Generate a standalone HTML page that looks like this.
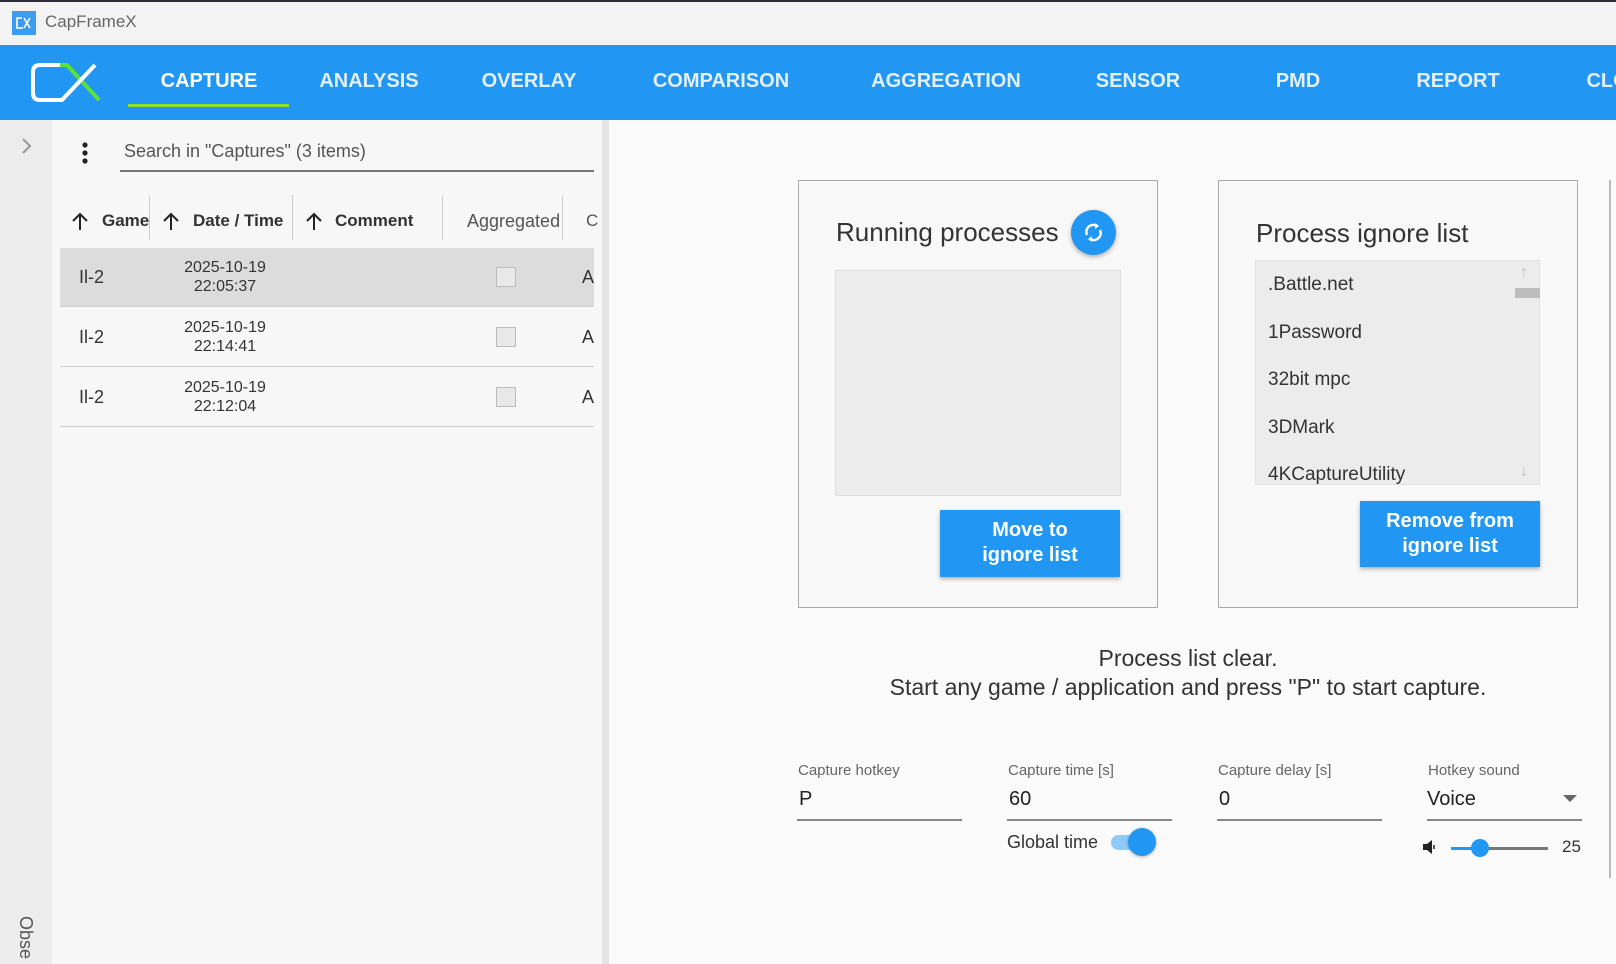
<!DOCTYPE html>
<html><head><meta charset="utf-8"><style>
*{box-sizing:border-box;margin:0;padding:0}
body{width:1616px;height:964px;overflow:hidden;background:#fafafa;font-family:"Liberation Sans",sans-serif;position:relative;color:#222}
.a{position:absolute}
.tab{position:absolute;top:70px;color:#e3f0fc;font-size:20px;font-weight:bold;transform:translateX(-50%);white-space:nowrap}
.hdr{position:absolute;top:211px;font-size:17px;font-weight:bold;color:#333}
.sep{position:absolute;top:195px;width:1px;height:45px;background:#ccc}
.row{position:absolute;left:60px;width:534px;border-bottom:1px solid #ccc}
.cell{position:absolute;font-size:18px;color:#333}
.dt{position:absolute;left:165px;width:120px;text-align:center;font-size:15px;line-height:19px;color:#333}
.cb{position:absolute;left:496px;width:20px;height:20px;border:1px solid #bbb;background:#e8e8e8}
.box{position:absolute;border:1px solid #aaa;background:#f8f8f8}
.btn{position:absolute;background:#2196f3;color:#fff;font-weight:bold;font-size:20px;text-align:center;line-height:25px;box-shadow:0 2px 4px rgba(0,0,0,.3);padding-top:8px}
.lbl{position:absolute;top:762px;font-size:15px;color:#666}
.val{position:absolute;top:786px;font-size:20px;color:#222}
.ul{position:absolute;top:819px;height:2px;background:#888}
.it{position:absolute;left:1268px;font-size:19px;color:#333}
</style></head><body>
<div class="a" style="left:0;top:0;width:1616px;height:2px;background:#2b2b3b"></div>
<div class="a" style="left:0;top:2px;width:1616px;height:43px;background:#f3f3f3"></div>
<div class="a" style="left:12px;top:11px;width:24px;height:24px;background:#3d9bf0"></div>
<svg class="a" style="left:12px;top:11px" width="24" height="24"><path d="M10 7H5v10h6M12 7l6 10M18 7l-6 10" stroke="#fff" stroke-width="1.6" fill="none"/></svg>
<div class="a" style="left:45px;top:12px;font-size:17px;color:#666">CapFrameX</div>
<div class="a" style="left:0;top:45px;width:1616px;height:75px;background:#2196f3"></div>
<svg class="a" style="left:20px;top:55px" width="90" height="55"><path d="M40 10H47L79 45" stroke="#5de03a" stroke-width="4" fill="none" stroke-linejoin="round"/><path d="M40 10H20Q13 10 13 17V38Q13 45 20 45H42L75 10" stroke="#fff" stroke-width="4" fill="none" stroke-linejoin="round"/></svg>
<div class="tab" style="left:209px;color:#fff">CAPTURE</div>
<div class="a" style="left:128px;top:104px;width:161px;height:3px;background:#8ee02a"></div>
<div class="tab" style="left:369px">ANALYSIS</div>
<div class="tab" style="left:529px">OVERLAY</div>
<div class="tab" style="left:721px">COMPARISON</div>
<div class="tab" style="left:946px">AGGREGATION</div>
<div class="tab" style="left:1138px">SENSOR</div>
<div class="tab" style="left:1298px">PMD</div>
<div class="tab" style="left:1458px">REPORT</div>
<div class="tab" style="left:1622px">CLOUD</div>
<div class="a" style="left:0;top:120px;width:52px;height:844px;background:#ececec"></div>
<svg class="a" style="left:20px;top:137px" width="14" height="18"><path d="M3 2l7 7-7 7" stroke="#999" stroke-width="2" fill="none"/></svg>
<div class="a" style="top:916px;font-size:18px;color:#555;transform:rotate(90deg);transform-origin:left top;left:36px">Obse</div>
<div class="a" style="left:52px;top:120px;width:550px;height:844px;background:#f7f7f7"></div>
<div class="a" style="left:602px;top:120px;width:7px;height:844px;background:#e4e4e4"></div>
<svg class="a" style="left:80px;top:141px" width="10" height="26"><circle cx="5" cy="4" r="2.6" fill="#222"/><circle cx="5" cy="12" r="2.6" fill="#222"/><circle cx="5" cy="20" r="2.6" fill="#222"/></svg>
<div class="a" style="left:124px;top:141px;font-size:18px;color:#555">Search in "Captures" (3 items)</div>
<div class="a" style="left:120px;top:170px;width:474px;height:2px;background:#777"></div>
<svg class="a" style="left:70px;top:211px" width="20" height="20"><path d="M10 19V3M3 10l7-7 7 7" stroke="#222" stroke-width="2" fill="none"/></svg>
<div class="hdr" style="left:102px">Game</div>
<div class="sep" style="left:149px"></div>
<svg class="a" style="left:161px;top:211px" width="20" height="20"><path d="M10 19V3M3 10l7-7 7 7" stroke="#222" stroke-width="2" fill="none"/></svg>
<div class="hdr" style="left:193px">Date / Time</div>
<div class="sep" style="left:292px"></div>
<svg class="a" style="left:304px;top:211px" width="20" height="20"><path d="M10 19V3M3 10l7-7 7 7" stroke="#222" stroke-width="2" fill="none"/></svg>
<div class="hdr" style="left:335px">Comment</div>
<div class="sep" style="left:442px"></div>
<div class="hdr" style="left:467px;font-weight:normal;color:#555;font-size:18px">Aggregated</div>
<div class="sep" style="left:562px"></div>
<div class="hdr" style="left:586px;font-weight:normal;color:#555">C</div>
<div class="row" style="top:248px;height:59px;background:#dcdcdc"></div>
<div class="row" style="top:307px;height:60px"></div>
<div class="row" style="top:367px;height:60px"></div>
<div class="cell" style="left:79px;top:267px">Il-2</div><div class="dt" style="top:258px;font-size:16px">2025-10-19<br>22:05:37</div><div class="cb" style="top:267px"></div><div class="cell" style="left:582px;top:267px">A</div>
<div class="cell" style="left:79px;top:327px">Il-2</div><div class="dt" style="top:318px;font-size:16px">2025-10-19<br>22:14:41</div><div class="cb" style="top:327px"></div><div class="cell" style="left:582px;top:327px">A</div>
<div class="cell" style="left:79px;top:387px">Il-2</div><div class="dt" style="top:378px;font-size:16px">2025-10-19<br>22:12:04</div><div class="cb" style="top:387px"></div><div class="cell" style="left:582px;top:387px">A</div>

<div class="box" style="left:798px;top:180px;width:360px;height:428px"></div>
<div class="a" style="left:836px;top:217px;font-size:26px;color:#333">Running processes</div>
<div class="a" style="left:1071px;top:210px;width:45px;height:45px;border-radius:50%;background:#2196f3;box-shadow:0 2px 5px rgba(0,0,0,.3)"></div>
<svg class="a" style="left:1081px;top:220px" width="25" height="25"><path d="M6 15A7 7 0 0 1 16 6M19 10A7 7 0 0 1 9 19" stroke="#fff" stroke-width="2.4" fill="none"/><path d="M14 3l4 3-4 3z M11 16l-4 3 4 3z" fill="#fff"/></svg>
<div class="a" style="left:835px;top:270px;width:286px;height:226px;background:#ececec;border:1px solid #ddd"></div>
<div class="btn" style="left:940px;top:510px;width:180px;height:67px">Move to<br>ignore list</div>

<div class="box" style="left:1218px;top:180px;width:360px;height:428px"></div>
<div class="a" style="left:1256px;top:218px;font-size:26px;color:#333">Process ignore list</div>
<div class="a" style="left:1255px;top:260px;width:285px;height:225px;background:#ececec;border:1px solid #e0e0e0"></div>
<div class="it" style="top:274px">.Battle.net</div>
<div class="it" style="top:322px">1Password</div>
<div class="it" style="top:369px">32bit mpc</div>
<div class="it" style="top:417px">3DMark</div>
<div class="it" style="top:464px">4KCaptureUtility</div>
<div class="a" style="left:1515px;top:288px;width:25px;height:10px;background:#bdbdbd"></div>
<div class="a" style="left:1520px;top:264px;font-size:16px;color:#bbb">↑</div>
<div class="a" style="left:1520px;top:463px;font-size:16px;color:#bbb">↓</div>
<div class="btn" style="left:1360px;top:501px;width:180px;height:66px">Remove from<br>ignore list</div>
<div class="a" style="left:1609px;top:180px;width:2px;height:698px;background:#bbb"></div>

<div class="a" style="left:788px;top:644px;width:800px;text-align:center;font-size:23px;line-height:29px;color:#333">Process list clear.<br>Start any game / application and press "P" to start capture.</div>

<div class="lbl" style="left:798px">Capture hotkey</div><div class="val" style="left:799px;top:788px">P</div><div class="ul" style="left:797px;width:165px"></div>
<div class="lbl" style="left:1008px">Capture time [s]</div><div class="val" style="left:1009px;top:788px">60</div><div class="ul" style="left:1007px;width:165px"></div>
<div class="lbl" style="left:1218px">Capture delay [s]</div><div class="val" style="left:1219px;top:788px">0</div><div class="ul" style="left:1217px;width:165px"></div>
<div class="lbl" style="left:1428px">Hotkey sound</div><div class="val" style="left:1427px;top:788px">Voice</div><div class="ul" style="left:1427px;width:155px"></div>
<svg class="a" style="left:1563px;top:795px" width="14" height="8"><path d="M0 0h14L7 7z" fill="#666"/></svg>
<div class="a" style="left:1007px;top:832px;font-size:18px;color:#333">Global time</div>
<div class="a" style="left:1111px;top:835px;width:42px;height:15px;border-radius:8px;background:#90caf9"></div>
<div class="a" style="left:1128px;top:828px;width:28px;height:28px;border-radius:50%;background:#2196f3;box-shadow:0 1px 3px rgba(0,0,0,.3)"></div>
<svg class="a" style="left:1422px;top:840px" width="16" height="14"><path d="M1 4h4l5-4v14l-5-4H1z" fill="#222"/><path d="M12 5v4" stroke="#222" stroke-width="1.5"/></svg>
<div class="a" style="left:1451px;top:847px;width:97px;height:3px;background:#777"></div>
<div class="a" style="left:1451px;top:847px;width:29px;height:3px;background:#2196f3"></div>
<div class="a" style="left:1471px;top:839px;width:18px;height:18px;border-radius:50%;background:#2196f3"></div>
<div class="a" style="left:1562px;top:837px;font-size:17px;color:#333">25</div>
</body></html>
